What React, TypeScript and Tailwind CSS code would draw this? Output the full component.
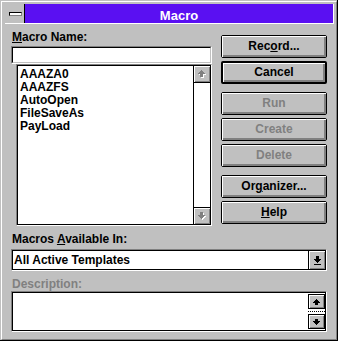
import React from "react";

type Row = [number, number];

function Pixels({ rows, w, color, shadow }: { rows: Row[]; w: number; color: string; shadow?: string }) {
  const h = rows.length;
  const sw = shadow ? w + 1 : w;
  const sh = shadow ? h + 1 : h;
  return (
    <svg width={sw} height={sh} viewBox={`0 0 ${sw} ${sh}`} shapeRendering="crispEdges">
      {shadow &&
        rows.map(([s, l], i) =>
          l > 0 ? <rect key={"s" + i} x={s + 1} y={i + 1} width={l} height={1} fill={shadow} /> : null
        )}
      {rows.map(([s, l], i) => (l > 0 ? <rect key={i} x={s} y={i} width={l} height={1} fill={color} /> : null))}
    </svg>
  );
}

const UP: Row[] = [
  [3, 1],
  [2, 3],
  [1, 5],
  [0, 7],
  [2, 3],
  [2, 3],
  [2, 3],
];
const DOWN: Row[] = [...UP].reverse();
const SPIN_UP: Row[] = [
  [3, 1],
  [2, 3],
  [1, 5],
  [0, 7],
  [2, 3],
  [2, 3],
];
const SPIN_DOWN: Row[] = [...SPIN_UP].reverse();
const DROP: Row[] = [
  [2, 3],
  [2, 3],
  [2, 3],
  [0, 7],
  [1, 5],
  [2, 3],
  [3, 1],
  [0, 0],
  [0, 7],
];

function Btn({
  children,
  disabled,
  def,
  className = "",
}: {
  children: React.ReactNode;
  disabled?: boolean;
  def?: boolean;
  className?: string;
}) {
  return (
    <div
      className={`h-[23px] w-[106px] rounded-[2px] border-black ${def ? "border-2" : "border"} bg-[#c0c0c0] flex ${className}`}
    >
      <div
        className={`flex-1 flex items-center justify-center shadow-[inset_1px_1px_0_#ffffff,inset_-2px_-2px_0_#808080] ${
          disabled ? "text-[#808080]" : "text-black"
        }`}
      >
        <span className="leading-[13px]">{children}</span>
      </div>
    </div>
  );
}

function U({ children }: { children: React.ReactNode }) {
  return <span className="underline decoration-1 underline-offset-1">{children}</span>;
}

export default function App() {
  return (
    <div className="w-[338px] h-[341px] bg-[#c0c0c0] pl-[1px] pt-[1px] border-r border-b border-black font-['Liberation_Sans',Arial,sans-serif] text-[12px] leading-[13px] font-bold text-black">
      <div className="h-full w-full border border-t-white border-l-white border-r-[#808080] border-b-[#808080] flex flex-col">
        {/* Title bar */}
        <div className="mt-[2px] ml-[3px] mr-[2px] h-[20px] border-r border-b border-white flex">
          <div className="w-[20px] h-full border-r border-black bg-[#c0c0c0] flex items-center pl-[4px]">
            <div className="w-[13px] h-[4px] bg-white border border-black border-r-[#808080] border-b-[#808080]" />
          </div>
          <div className="flex-1 h-full bg-[#5a10f2] flex items-center justify-center pt-[3px]">
            <span className="text-white text-[13px] leading-[15px] font-bold">Macro</span>
          </div>
        </div>

        {/* Content */}
        <div className="flex flex-col pl-[9px] pr-[9px]">
          <div className="flex">
            {/* left column */}
            <div className="w-[201px] flex flex-col">
              <div className="mt-[7px] h-[13px] pl-[1px]">
                <U>M</U>acro Name:
              </div>
              <div className="mt-[2px] h-[18px] border border-t-[#808080] border-l-[#808080] border-r-white border-b-white">
                <div className="h-full border border-t-black border-l-black border-r-[#c0c0c0] border-b-[#c0c0c0] bg-white" />
              </div>
              <div className="ml-[5px] w-[196px] h-[162px] border border-t-[#808080] border-l-[#808080] border-r-white border-b-white">
                <div className="h-full border border-black bg-white flex">
                  <div className="flex-1 pl-[2px] pt-[2px] flex flex-col">
                    <div className="h-[13px]">AAAZA0</div>
                    <div className="h-[13px]">AAAZFS</div>
                    <div className="h-[13px]">AutoOpen</div>
                    <div className="h-[13px]">FileSaveAs</div>
                    <div className="h-[13px]">PayLoad</div>
                  </div>
                  <div className="w-[17px] border-l border-black flex flex-col">
                    <div className="h-[17px] border-b border-black bg-[#c0c0c0] shadow-[inset_1px_1px_0_#ffffff,inset_-1px_-1px_0_#808080] flex items-center justify-center">
                      <Pixels rows={UP} w={7} color="#808080" shadow="#ffffff" />
                    </div>
                    <div className="flex-1 bg-white" />
                    <div className="h-[17px] border-t border-black bg-[#c0c0c0] shadow-[inset_1px_1px_0_#ffffff,inset_-1px_-1px_0_#808080] flex items-center justify-center">
                      <Pixels rows={DOWN} w={7} color="#808080" shadow="#ffffff" />
                    </div>
                  </div>
                </div>
              </div>
            </div>

            {/* right column */}
            <div className="ml-[9px] w-[106px] flex flex-col">
              <Btn className="mt-[11px]">
                Rec<U>o</U>rd...
              </Btn>
              <Btn def className="mt-[3px]">
                Cancel
              </Btn>
              <Btn disabled className="mt-[8px]">
                Run
              </Btn>
              <Btn disabled className="mt-[3px]">
                Create
              </Btn>
              <Btn disabled className="mt-[3px]">
                Delete
              </Btn>
              <Btn className="mt-[8px]">
                Or<U>g</U>anizer...
              </Btn>
              <Btn className="mt-[3px]">
                <U>H</U>elp
              </Btn>
            </div>
          </div>

          <div className="mt-[7px] h-[13px] pl-[1px]">
            Macros <U>A</U>vailable In:
          </div>
          <div className="mt-[3px] h-[22px] border border-t-[#808080] border-l-[#808080] border-r-white border-b-white">
            <div className="h-full border border-black bg-white flex">
              <div className="flex-1 flex items-center pl-[1px]">All Active Templates</div>
              <div className="w-[17px] h-full border-l border-black bg-[#c0c0c0] shadow-[inset_1px_1px_0_#ffffff,inset_-1px_-1px_0_#808080] flex items-center justify-center">
                <Pixels rows={DROP} w={7} color="#000000" />
              </div>
            </div>
          </div>

          <div className="mt-[7px] h-[13px] pl-[1px] text-[#808080]">Description:</div>
          <div className="h-[41px] border border-t-[#808080] border-l-[#808080] border-r-white border-b-white">
            <div className="h-full border border-black bg-white flex">
              <div className="flex-1" />
              <div className="w-[17px] flex flex-col pt-[1px]">
                <div className="h-[15px] border border-black bg-[#c0c0c0] shadow-[inset_1px_1px_0_#ffffff,inset_-1px_-1px_0_#808080] flex items-center justify-center">
                  <Pixels rows={SPIN_UP} w={7} color="#000000" />
                </div>
                <div className="h-[5px] flex items-center">
                  <div className="w-full border-t border-dotted border-black" />
                </div>
                <div className="h-[15px] border border-black bg-[#c0c0c0] shadow-[inset_1px_1px_0_#ffffff,inset_-1px_-1px_0_#808080] flex items-center justify-center">
                  <Pixels rows={SPIN_DOWN} w={7} color="#000000" />
                </div>
              </div>
            </div>
          </div>
        </div>
      </div>
    </div>
  );
}
